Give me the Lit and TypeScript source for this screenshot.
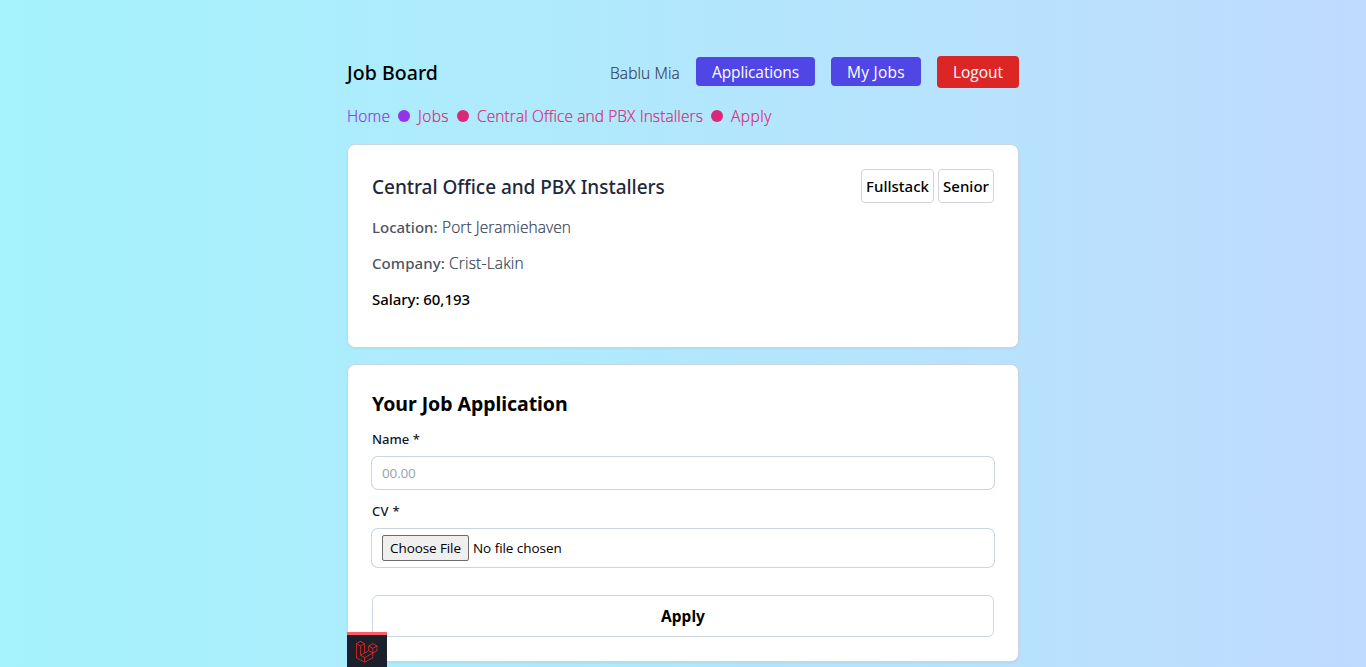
import { LitElement, html, css } from "lit";

class JobCard extends LitElement {
  static styles = css`
    :host {
      display: block;
      box-sizing: border-box;
      padding: 24px;
      border: 1px solid #cbd5e1;
      border-radius: 8px;
      background: #fff;
      box-shadow: 0 1px 2px 0 rgba(0, 0, 0, 0.05);
    }
  `;
  render() {
    return html`<slot></slot>`;
  }
}
customElements.define("job-card", JobCard);

class AppRoot extends LitElement {
  static styles = css`
    :host {
      display: block;
      box-sizing: border-box;
      height: 667px;
      overflow: hidden;
      position: relative;
      padding-top: 56px;
      background: linear-gradient(to right, #a5f3fc, #bfdbfe);
      color: #334155;
      font: 300 15.5px/24px "Open Sans", sans-serif;
    }
    .page { width: 672px; margin: 0 auto; }
    nav { display: flex; height: 32px; align-items: center; gap: 16px; }
    .brand {
      flex: 1;
      color: #000;
      font: 500 19.5px/28px "Noto Sans", sans-serif;
      letter-spacing: 0.05px;
      padding-top: 1px;
    }
    .light { -webkit-text-stroke: 0.2px currentColor; }
    .user { width: 70px; letter-spacing: 0.11px; white-space: nowrap; padding-top: 1px; }
    .btn {
      box-sizing: border-box;
      height: 29px;
      margin-bottom: 1px;
      border-radius: 4px;
      background: #4f46e5;
      color: #fff;
      font-size: 15.5px;
      font-weight: 400;
      line-height: 30px;
      text-align: center;
      white-space: nowrap;
    }
    .btn-apps { width: 119px; letter-spacing: -0.1px; }
    .btn-jobs { width: 90px; letter-spacing: 0.25px; }
    .btn-out { width: 82px; height: 32px; margin: 0; line-height: 33px; background: #dc2626; }
    .crumbs {
      display: flex;
      align-items: center;
      gap: 8px;
      height: 24px;
      margin: 16px 0;
      color: #db2777;
      white-space: nowrap;
    }
    .crumb-home { width: 43px; color: #9333ea; letter-spacing: 0.15px; }
    .crumb-jobs { width: 31px; letter-spacing: 0.4px; }
    .crumb-title { width: 226px; letter-spacing: 0.09px; }
    .crumb-apply { letter-spacing: 0.5px; }
    .dot { width: 12px; height: 12px; border-radius: 50%; background: #db2777; }
    .dot-home { background: #9333ea; }
    .job { height: 204px; margin-bottom: 16px; }
    .job-head { display: flex; justify-content: space-between; align-items: center; margin-bottom: 12px; }
    h2 {
      margin: 0;
      padding-top: 2px;
      color: #1e293b;
      font: 500 19px/28px "Noto Sans", sans-serif;
      letter-spacing: -0.04px;
    }
    .tags { display: flex; gap: 4px; }
    .tag {
      box-sizing: border-box;
      border: 1px solid #d1d5db;
      border-radius: 4px;
      padding: 4px 0;
      color: #000;
      font: 500 15px/24px "Noto Sans", sans-serif;
      text-align: center;
    }
    .tag-type { width: 73px; }
    .tag-level { width: 56px; }
    p { margin: 0 0 12px; white-space: pre; display: flex; gap: 4px; }
    .key { color: #4b5563; font: 500 15px/24px "Noto Sans", sans-serif; }
    .key-loc { width: 66px; }
    .key-co { width: 73px; letter-spacing: 0.08px; }
    .loc { letter-spacing: 0.07px; }
    .company { letter-spacing: 0.18px; }
    .salary { color: #000; font: 500 15px/24px "Noto Sans", sans-serif; letter-spacing: -0.05px; }
    .apply { height: 298px; }
    h3 {
      margin: 1px 0 11px;
      color: #000;
      font: 700 19.5px/28px "Noto Sans", sans-serif;
      letter-spacing: -0.05px;
    }
    label { display: block; color: #0f172a; font: 500 13px/20px "Noto Sans", sans-serif; margin-bottom: 8px; }
    .label-cv { letter-spacing: 0.3px; }
    .field {
      box-sizing: border-box;
      display: flex;
      align-items: center;
      height: 32px;
      padding: 0 10px;
      border-radius: 6px;
      box-shadow: 0 0 0 1px #cbd5e1;
      margin-bottom: 12px;
      font-weight: 400;
      font-size: 13.5px;
      line-height: 20px;
      color: #94a3b8;
    }
    .name { letter-spacing: -0.15px; }
    .file { height: 38px; gap: 4px; color: #000; margin-bottom: 28px; letter-spacing: -0.05px; }
    .choose {
      box-sizing: border-box;
      width: 87px;
      height: 26px;
      padding: 0;
      border: 1px solid #6b6b6b;
      border-radius: 2px;
      background: #efefef;
      color: #000;
      font: inherit;
      letter-spacing: -0.1px;
      text-align: center;
    }
    .submit {
      display: block;
      box-sizing: border-box;
      width: 100%;
      height: 42px;
      border: 1px solid #cbd5e1;
      border-radius: 6px;
      background: #fff;
      color: #000;
      font: 700 15.5px/24px "Noto Sans", sans-serif;
    }
    .debug {
      position: absolute;
      left: 347px;
      bottom: 0;
      box-sizing: border-box;
      width: 40px;
      height: 35px;
      border-top: 3px solid #ff5a65;
      background: #1b202c;
      padding: 6px 0 0 9px;
    }
    .debug svg { display: block; width: 21.5px; height: 22px; }
  `;

  render() {
    return html`
      <div class="page">
        <nav>
          <div class="brand">Job Board</div>
          <div class="user light">Bablu Mia</div>
          <div class="btn btn-apps">Applications</div>
          <div class="btn btn-jobs">My Jobs</div>
          <div class="btn btn-out">Logout</div>
        </nav>
        <div class="crumbs light">
          <span class="crumb-home">Home</span>
          <span class="dot dot-home"></span>
          <span class="crumb-jobs">Jobs</span>
          <span class="dot"></span>
          <span class="crumb-title">Central Office and PBX Installers</span>
          <span class="dot"></span>
          <span class="crumb-apply">Apply</span>
        </div>
        <job-card class="job">
          <div class="job-head">
            <h2>Central Office and PBX Installers</h2>
            <div class="tags">
              <div class="tag tag-type">Fullstack</div>
              <div class="tag tag-level">Senior</div>
            </div>
          </div>
          <p><span class="key key-loc">Location:</span><span class="loc light">Port Jeramiehaven</span></p>
          <p><span class="key key-co">Company:</span><span class="company light">Crist-Lakin</span></p>
          <p class="salary">Salary: 60,193</p>
        </job-card>
        <job-card class="apply">
          <h3>Your Job Application</h3>
          <label>Name *</label>
          <div class="field name">00.00</div>
          <label class="label-cv">CV *</label>
          <div class="field file">
            <button class="choose">Choose File</button>
            <span>No file chosen</span>
          </div>
          <button class="submit">Apply</button>
        </job-card>
      </div>
      <div class="debug">
        <svg viewBox="0 0 50 52" preserveAspectRatio="none" fill="#ff2d20">
          <path
            d="M49.626 11.564a.809.809 0 0 1 .028.209v10.972a.8.8 0 0 1-.402.694l-9.209 5.302V39.25c0 .286-.152.55-.4.694L20.42 51.01c-.044.025-.092.041-.14.058-.018.006-.035.017-.054.022a.805.805 0 0 1-.41 0c-.022-.006-.042-.018-.063-.026-.044-.016-.09-.03-.132-.054L.402 39.944A.801.801 0 0 1 0 39.25V6.334c0-.072.01-.142.028-.21.006-.023.02-.044.028-.067.015-.042.029-.085.051-.124.015-.026.037-.047.055-.071.023-.032.044-.065.071-.093.023-.023.053-.04.079-.06.029-.024.055-.05.088-.069h.001l9.61-5.533a.802.802 0 0 1 .8 0l9.61 5.533h.002c.032.02.059.045.088.068.026.02.055.038.078.06.028.029.048.062.072.094.017.024.04.045.054.071.023.04.036.082.052.124.008.023.022.044.028.068a.809.809 0 0 1 .028.209v20.559l8.008-4.611v-10.51c0-.07.01-.141.028-.208.007-.024.02-.045.028-.068.016-.042.03-.085.052-.124.015-.026.037-.047.054-.071.024-.032.044-.065.072-.093.023-.023.052-.04.078-.06.03-.024.056-.05.088-.069h.001l9.611-5.533a.801.801 0 0 1 .8 0l9.61 5.533c.034.02.06.045.09.068.025.02.054.038.077.06.028.029.048.062.072.094.018.024.04.045.054.071.023.039.036.082.052.124.009.023.022.044.028.068zm-1.574 10.718v-9.124l-3.363 1.936-4.646 2.675v9.124l8.01-4.611zm-9.61 16.505v-9.13l-4.57 2.61-13.05 7.448v9.216l17.62-10.144zM1.602 7.719v31.068L19.22 48.93v-9.214l-9.204-5.209-.003-.002-.004-.002c-.031-.018-.057-.044-.086-.066-.025-.02-.054-.036-.076-.058l-.002-.003c-.026-.025-.044-.056-.066-.084-.02-.027-.044-.05-.06-.078l-.001-.003c-.018-.03-.029-.066-.042-.1-.013-.03-.03-.058-.038-.09v-.001c-.01-.038-.012-.078-.016-.117-.004-.03-.012-.06-.012-.09v-.002-21.481L4.965 9.654 1.602 7.72zm8.81-5.994L2.405 6.334l8.005 4.609 8.006-4.61-8.006-4.608zm4.164 28.764l4.645-2.674V7.719l-3.363 1.936-4.646 2.675v20.096l3.364-1.937zM39.243 7.164l-8.006 4.609 8.006 4.609 8.005-4.61-8.005-4.608zm-.801 10.605l-4.646-2.675-3.363-1.936v9.124l4.645 2.674 3.364 1.937v-9.124zM20.02 38.33l11.743-6.704 5.87-3.35-8-4.606-9.211 5.303-8.395 4.833 7.993 4.524z"
          ></path>
        </svg>
      </div>
    `;
  }
}
customElements.define("app-root", AppRoot);
